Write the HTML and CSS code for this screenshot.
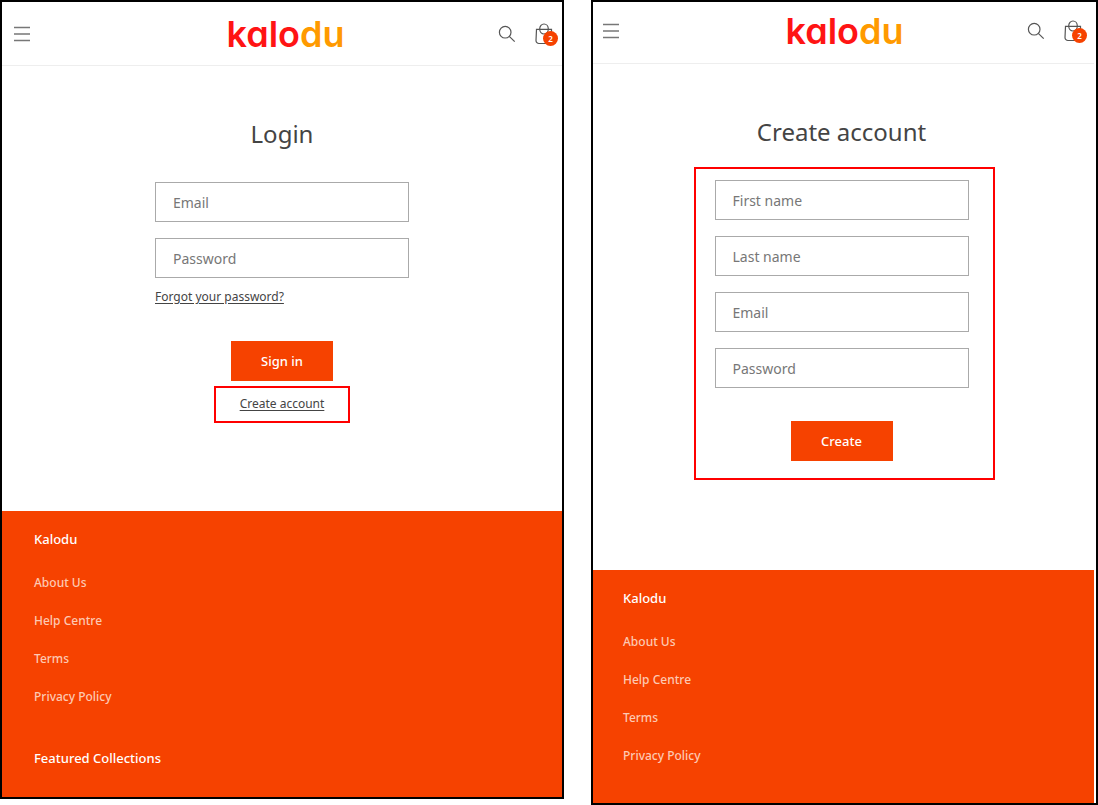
FILE: index.html
```html
<!DOCTYPE html>
<html lang="en">
<head>
	<meta charset="utf-8">
	<meta name="viewport" content="width=device-width, initial-scale=1">
	<title>Kalodu - Account</title>
	<link rel="stylesheet" href="styles.css">
</head>
<body>

	<svg class="sprite" aria-hidden="true">
		<symbol id="icon-menu" viewBox="0 0 18 18">
			<path d="M1 2.5h16M1 9h16M1 15.5h16" fill="none" stroke="#777" stroke-width="1.4"/>
		</symbol>
		<symbol id="icon-search" viewBox="0 0 18 18">
			<circle cx="7.2" cy="7.2" r="5.8" fill="none" stroke="#555" stroke-width="1.2"/>
			<path d="M11.3 11.3l5.4 5.4" fill="none" stroke="#555" stroke-width="1.2"/>
		</symbol>
		<symbol id="icon-bag" viewBox="0 0 18 22">
			<path d="M1.5 6.3h15v11.2a3 3 0 0 1-3 3H4a3 3 0 0 1-3-3z" fill="none" stroke="#555" stroke-width="1.2"/>
			<ellipse cx="9" cy="6" rx="4.3" ry="5" fill="none" stroke="#555" stroke-width="1.2"/>
		</symbol>
	</svg>

	<div class="screens">

		<section class="screen screen-login">
			<header class="header">
				<button class="icon-btn" type="button" aria-label="Menu"><svg class="icon"><use href="#icon-menu"/></svg></button>
				<a class="logo" href="#">kalo<span class="logo-du">du</span></a>
				<div class="header-right">
					<button class="icon-btn" type="button" aria-label="Search"><svg class="icon"><use href="#icon-search"/></svg></button>
					<a class="cart" href="#" aria-label="Cart"><svg class="icon-bag"><use href="#icon-bag"/></svg><span class="cart-count">2</span></a>
				</div>
			</header>
			<main class="main">
				<h1 class="title">Login</h1>
				<form class="form">
					<input class="field" type="email" placeholder="Email" aria-label="Email">
					<input class="field" type="password" placeholder="Password" aria-label="Password">
					<a class="link forgot" href="#">Forgot your password?</a>
					<button class="btn" type="button">Sign in</button>
					<div class="create">
						<a class="link" href="#">Create account</a>
						<span class="mark mark-link"></span>
					</div>
				</form>
			</main>
			<footer class="footer">
				<h2 class="footer-title">Kalodu</h2>
				<ul class="footer-list">
					<li><a href="#">About Us</a></li>
					<li><a href="#">Help Centre</a></li>
					<li><a href="#">Terms</a></li>
					<li><a href="#">Privacy Policy</a></li>
				</ul>
				<h2 class="footer-title">Featured Collections</h2>
			</footer>
		</section>

		<section class="screen screen-register">
			<header class="header">
				<button class="icon-btn" type="button" aria-label="Menu"><svg class="icon"><use href="#icon-menu"/></svg></button>
				<a class="logo" href="#">kalo<span class="logo-du">du</span></a>
				<div class="header-right">
					<button class="icon-btn" type="button" aria-label="Search"><svg class="icon"><use href="#icon-search"/></svg></button>
					<a class="cart" href="#" aria-label="Cart"><svg class="icon-bag"><use href="#icon-bag"/></svg><span class="cart-count">2</span></a>
				</div>
			</header>
			<main class="main">
				<h1 class="title">Create account</h1>
				<form class="form">
					<input class="field" type="text" placeholder="First name" aria-label="First name">
					<input class="field" type="text" placeholder="Last name" aria-label="Last name">
					<input class="field" type="email" placeholder="Email" aria-label="Email">
					<input class="field" type="password" placeholder="Password" aria-label="Password">
					<button class="btn" type="button">Create</button>
					<span class="mark mark-form"></span>
				</form>
			</main>
			<footer class="footer">
				<h2 class="footer-title">Kalodu</h2>
				<ul class="footer-list">
					<li><a href="#">About Us</a></li>
					<li><a href="#">Help Centre</a></li>
					<li><a href="#">Terms</a></li>
					<li><a href="#">Privacy Policy</a></li>
				</ul>
			</footer>
		</section>

	</div>

</body>
</html>
```
FILE: styles.css
```css
* {
	box-sizing: border-box;
}

body {
	margin: 0;
	background: #fff;
	color: #444;
	font-family: "Noto Sans", "Open Sans", sans-serif;
	font-size: 13px;
}

.sprite {
	display: none;
}

.screens {
	display: grid;
	grid-template-columns: 564fr 507fr;
	gap: 27px;
	min-height: 100vh;
}

.screen {
	display: flex;
	flex-direction: column;
	border: 2px solid #000;
}

.screen-login {
	margin-bottom: 6px;
}

.screen-register {
	padding-right: 2px;
}

/* header */
.header {
	display: grid;
	grid-template-columns: 1fr auto 1fr;
	align-items: center;
	height: 64px;
	padding: 0 4px 0 11px;
	border-bottom: 1px solid #eee;
}

.screen-register .header {
	height: 62px;
	padding: 0 7px 4px 9px;
}

.icon-btn {
	display: flex;
	width: 18px;
	padding: 0;
	border: 0;
	background: none;
	cursor: pointer;
}

.icon {
	width: 18px;
	height: 18px;
}

.logo {
	color: #ff1414;
	font-family: Inter, Lato, sans-serif;
	font-feature-settings: "cv11";
	font-size: 36px;
	font-weight: 600;
	line-height: 56px;
	text-decoration: none;
}

.logo-du {
	color: #ff9a00;
}

.header-right {
	display: flex;
	align-items: center;
	justify-content: flex-end;
	gap: 19px;
}

.cart {
	position: relative;
	display: flex;
	width: 23px;
}

.icon-bag {
	width: 18px;
	height: 22px;
}

.cart-count {
	position: absolute;
	right: 0;
	bottom: -1px;
	width: 15px;
	height: 15px;
	border-radius: 50%;
	background: #f64200;
	color: #fff;
	font-size: 8px;
	font-weight: 600;
	line-height: 15px;
	text-align: center;
}

/* forms */
.main {
	padding: 50px 20px 97px;
}

.screen-register .main {
	padding: 50px 24px 109px 20px;
}

.title {
	margin: 0 0 30px;
	font-size: 24px;
	font-weight: 400;
	line-height: 36px;
	text-align: center;
}

.form {
	position: relative;
	display: flex;
	flex-direction: column;
	max-width: 254px;
	margin: 0 auto;
}

.field {
	width: 100%;
	height: 40px;
	margin-bottom: 16px;
	padding: 0 17px;
	border: 1px solid #aaa;
	border-radius: 0;
	color: #444;
	font-family: inherit;
	font-size: 14px;
}

.field::placeholder {
	color: #777;
	opacity: 1;
}

.link {
	color: #444;
	font-size: 12px;
	line-height: 20px;
	text-decoration: underline;
	text-underline-offset: 2px;
}

.forgot {
	align-self: flex-start;
	margin-top: -7px;
}

.btn {
	align-self: center;
	width: 102px;
	height: 40px;
	margin-top: 34px;
	border: 0;
	background: #f64200;
	color: #fff;
	font-family: inherit;
	font-size: 13px;
	font-weight: 500;
	cursor: pointer;
}

.screen-register .btn {
	margin-top: 17px;
}

.create {
	position: relative;
	align-self: center;
	margin-top: 12px;
	line-height: 20px;
}

/* red frames over the part to look at */
.mark {
	position: absolute;
	border: 2px solid #f00;
	pointer-events: none;
}

.mark-link {
	inset: -7px -26px -9px;
}

.mark-form {
	inset: -13px -26px -19px -21px;
}

/* footer */
.footer {
	flex: 1;
	padding: 18px 32px;
	background: #f64200;
	color: #fff;
}

.screen-register .footer {
	padding-left: 30px;
}

.footer-title {
	margin: 0;
	font-size: 13px;
	font-weight: 500;
	line-height: 20px;
}

.footer-list {
	margin: 15px 0 32px;
	padding: 0;
	list-style: none;
	font-size: 12px;
	font-weight: 500;
	line-height: 38px;
}

.screen-register .footer-list {
	margin-bottom: 0;
}

.footer-list a {
	color: #fdc9b3;
	text-decoration: none;
}
```
